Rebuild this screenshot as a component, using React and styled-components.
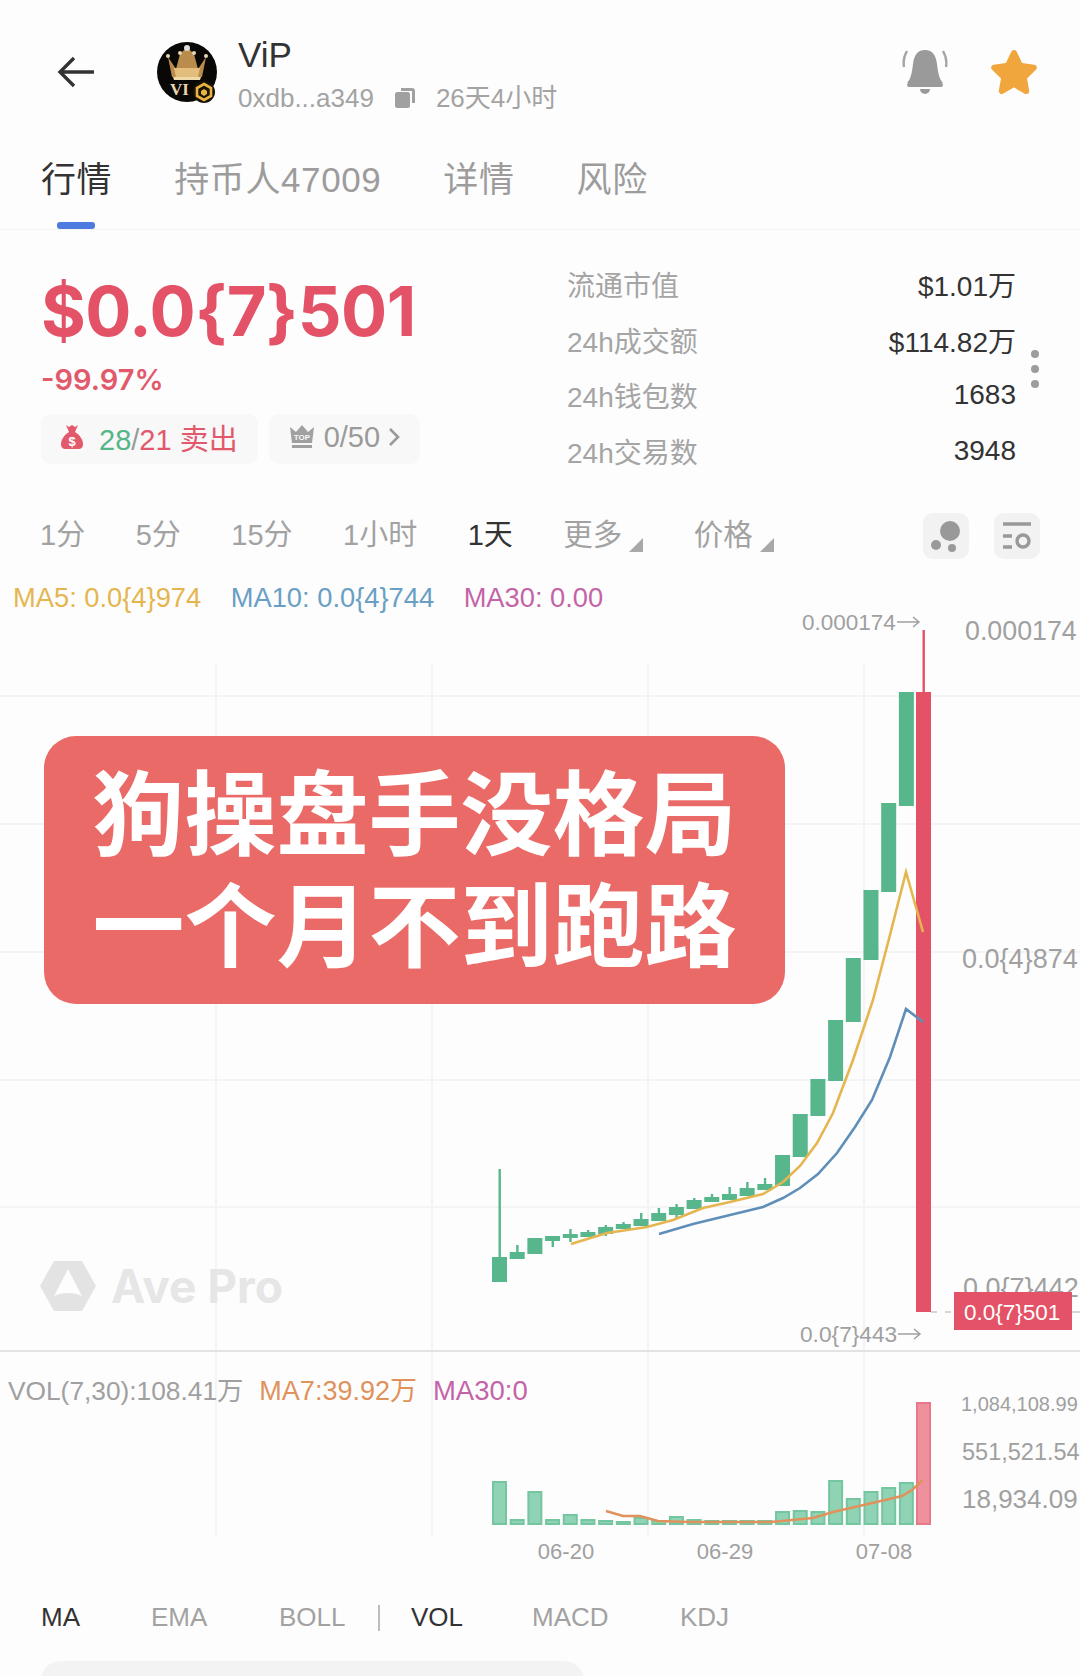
import styled, { createGlobalStyle } from "styled-components";

const FONT = `"Liberation Sans", "Noto Sans CJK SC", sans-serif`;

const GlobalStyle = createGlobalStyle`
  html, body {
    margin: 0;
    padding: 0;
    background: #fdfdfd;
  }
  body {
    font-family: ${FONT};
  }
`;

const Page = styled.div`
  width: 1080px;
  height: 1676px;
  overflow: hidden;
  background: #fdfdfd;
  color: #333;
`;

const Header = styled.header`
  height: 130px;
  box-sizing: border-box;
  padding: 42px 42px 0 57px;
  display: flex;
  align-items: flex-start;
`;
const BackBtn = styled.div`
  width: 99px;
  height: 60px;
  display: flex;
  align-items: center;
`;
const Avatar = styled.svg`
  width: 62px;
  height: 62px;
  flex: none;
`;
const TokenInfo = styled.div`
  margin-left: 20px;
  flex: 1;
  margin-top: -6px;
`;
const TokenName = styled.div`
  font-size: 35px;
  line-height: 38px;
  color: #333;
`;
const TokenMeta = styled.div`
  display: flex;
  align-items: center;
  gap: 20px;
  margin-top: 9px;
  font-size: 26px;
  line-height: 30px;
  color: #a3a3a3;
`;
const HeadIcons = styled.div`
  display: flex;
  align-items: center;
  gap: 42px;
  margin-top: 5px;
`;

const Tabs = styled.nav`
  height: 100px;
  box-sizing: border-box;
  padding-left: 41px;
  border-bottom: 1px solid #f4f4f4;
  display: flex;
  gap: 62px;
`;
const Tab = styled.div`
  position: relative;
  font-size: 35px;
  line-height: 100px;
  height: 99px;
  letter-spacing: 0.6px;
  color: ${(p) => (p.$active ? "#333" : "#9c9c9c")};
  &::after {
    content: "";
    display: ${(p) => (p.$active ? "block" : "none")};
    position: absolute;
    left: 16px;
    bottom: 0;
    width: 38px;
    height: 7px;
    border-radius: 3px;
    background: #4f7ae0;
  }
`;

const Summary = styled.section`
  height: 270px;
  box-sizing: border-box;
  padding: 26px 0 0 41px;
  display: flex;
`;
const PriceCol = styled.div`
  width: 526px;
  padding-top: 17px;
`;
const Price = styled.div`
  font-family: "Inter", ${FONT};
  font-size: 68.5px;
  line-height: 78px;
  font-weight: 700;
  letter-spacing: -0.5px;
  color: #e35266;
`;
const Change = styled.div`
  margin-top: 12px;
  font-family: "Inter", ${FONT};
  font-size: 29px;
  line-height: 34px;
  font-weight: 600;
  color: #e2596c;
`;
const Badges = styled.div`
  display: flex;
  gap: 11px;
  margin-top: 17px;
`;
const Badge = styled.div`
  height: 50px;
  box-sizing: border-box;
  padding: 0 20px 4px ${(p) => p.$pad}px;
  border-radius: 10px;
  background: #f8f8f8;
  display: flex;
  align-items: center;
  font-size: 29px;
  color: #9a9a9a;
  white-space: pre;
`;
const Green = styled.span`
  color: #56b68a;
`;
const Red = styled.span`
  color: #e2596c;
`;
const StatsCol = styled.div`
  width: 449px;
`;
const StatRow = styled.div`
  height: 55.8px;
  display: flex;
  align-items: center;
  justify-content: space-between;
  font-size: 28px;
`;
const StatLabel = styled.span`
  color: #a5a5a5;
`;
const StatValue = styled.span`
  color: #333;
`;
const MoreDots = styled.div`
  width: 40px;
  margin-top: 94px;
  margin-left: 15px;
  display: flex;
  flex-direction: column;
  gap: 7px;
`;
const Dot = styled.i`
  width: 8px;
  height: 8px;
  border-radius: 50%;
  background: #9c9c9c;
`;

const Intervals = styled.section`
  height: 58px;
  box-sizing: border-box;
  padding: 0 40px 0 40px;
  margin-top: 2.5px;
  display: flex;
  align-items: center;
  gap: 50.5px;
  font-size: 29px;
  color: #a2a2a2;
`;
const Interval = styled.div`
  position: relative;
  color: ${(p) => (p.$active ? "#333" : "#a2a2a2")};
  ${(p) =>
    p.$drop &&
    `
    font-size: 29.5px;
    margin-right: 21px;
    &::after {
      content: "";
      position: absolute;
      right: -21px;
      bottom: 1px;
      border-left: 14px solid transparent;
      border-bottom: 14px solid #a8a8a8;
    }
  `}
`;
const ToolButtons = styled.div`
  margin-left: auto;
  margin-top: 8px;
  display: flex;
  gap: 25px;
`;
const ToolButton = styled.div`
  width: 46px;
  height: 46px;
  border-radius: 10px;
  background: #f2f2f2;
  display: flex;
  align-items: center;
  justify-content: center;
`;

const Legend = styled.div`
  height: 28px;
  margin-top: 23px;
  padding-left: ${(p) => p.$left}px;
  display: flex;
  align-items: center;
  gap: 29.5px;
  font-size: 27.3px;
  white-space: nowrap;
`;
const LegendItem = styled.span`
  color: ${(p) => p.$color};
  ${(p) => p.$size && `font-size: ${p.$size}px;`}
`;

const ChartArea = styled.section`
  position: relative;
  height: 738px;
  border-bottom: 2px solid #e3e3e3;
`;
const ChartSvg = styled.svg`
  display: block;
  width: 1080px;
  height: ${(p) => p.$h}px;
  overflow: visible;
`;
const AxisText = styled.text`
  font-family: ${FONT};
  font-size: ${(p) => p.$size || 26}px;
  fill: ${(p) => p.$fill || "#a0a0a0"};
`;
const Banner = styled.div`
  position: absolute;
  left: 44px;
  top: 124px;
  width: 741px;
  height: 268px;
  border-radius: 32px;
  background: #ea6a67;
  color: #fff;
  font-size: 92px;
  font-weight: 700;
  line-height: 112px;
  text-align: center;
  box-sizing: border-box;
  padding-top: 24px;
  white-space: nowrap;
`;
const Watermark = styled.div`
  position: absolute;
  left: 40px;
  top: 646px;
  display: flex;
  align-items: center;
  gap: 15px;
  font-family: "Inter", ${FONT};
  font-size: 46px;
  font-weight: 700;
  color: #e6e6e6;
`;

const VolumeArea = styled.section`
  position: relative;
  height: 217px;
`;
const VolLegend = styled(Legend)`
  position: absolute;
  top: 17px;
  left: 0;
  margin-top: 0;
  align-items: baseline;
  gap: 16px;
  font-size: 26.3px;
`;

const Indicators = styled.section`
  height: 52px;
  margin-top: 23px;
  padding-left: 41px;
  display: flex;
  align-items: center;
  font-size: 26px;
  color: #a2a2a2;
`;
const Indicator = styled.div`
  width: ${(p) => p.$w}px;
  color: ${(p) => (p.$active ? "#333" : "#a2a2a2")};
`;
const Divider = styled.div`
  width: 2px;
  height: 26px;
  background: #bdbdbd;
  margin-right: 31px;
`;
const BottomPanel = styled.div`
  width: 543px;
  height: 60px;
  margin: 17px 0 0 41px;
  border-radius: 20px 20px 0 0;
  background: #f3f3f3;
`;

const CANDLE_X = (i) => 499.5 + 17.69 * i;

// [top, bottom, wickTop, wickBottom]
const CANDLES = [
  [1257, 1282, 1169, 1282],
  [1252, 1259, 1245, 1259],
  [1238, 1254, 1238, 1254],
  [1236, 1241, 1236, 1247],
  [1234, 1238, 1229, 1242],
  [1232, 1237, 1230, 1237],
  [1227, 1234, 1225, 1236],
  [1224, 1229, 1222, 1229],
  [1219, 1226, 1213, 1226],
  [1213, 1221, 1208, 1221],
  [1207, 1215, 1204, 1218],
  [1200, 1209, 1198, 1209],
  [1197, 1202, 1194, 1202],
  [1194, 1200, 1187, 1200],
  [1188, 1196, 1182, 1196],
  [1184, 1190, 1178, 1190],
  [1155, 1186, 1155, 1186],
  [1114, 1157, 1114, 1157],
  [1079, 1116, 1079, 1116],
  [1020, 1081, 1020, 1081],
  [958, 1022, 958, 1022],
  [890, 960, 890, 960],
  [803, 892, 803, 892],
  [692, 806, 692, 806],
];

const MA5 =
  "571,1244 607,1233 647,1227 673,1220 703,1208 730,1202 763,1194 783,1182 800,1166 817,1143 833,1113 853,1060 873,1000 890,935 906,872 923,932";
const MA10 =
  "659,1234 693,1224 730,1215 763,1207 783,1198 800,1188 818,1174 837,1153 855,1127 872,1100 890,1057 906,1009 923,1022";
const MA7 =
  "606,1511 623,1516 640,1516 658,1521 690,1522 771,1522 813,1518 833,1512 868,1504 902,1496 912,1490 923,1480";

const VOL_TOPS = [
  1482, 1520, 1492, 1520, 1515, 1520, 1521, 1522, 1518, 1521, 1517, 1520, 1521, 1521, 1521, 1521,
  1512, 1511, 1512, 1481, 1499, 1492, 1488, 1483,
];

const BackIcon = () => (
  <svg width="38" height="32" viewBox="0 0 38 32" fill="none" stroke="#333" strokeWidth="3.4">
    <path d="M37 16H3M17 2 3 16l14 14" />
  </svg>
);

const TokenAvatar = () => (
  <Avatar viewBox="0 0 62 62">
    <circle cx="31" cy="30" r="30" fill="#0a0806" />
    <path d="M12 15l8 12 4-15 7-7 7 7 4 15 8-12-4 20H16z" fill="#b98c4c" />
    <path d="M18 26h26l-2 9H20z" fill="#e3bd7c" />
    <path d="M17 35h28l-1 3H18z" fill="#f0d9a8" />
    <circle cx="12" cy="14" r="2" fill="#e6d6b8" />
    <circle cx="50" cy="14" r="2" fill="#e6d6b8" />
    <circle cx="24" cy="11" r="2" fill="#e6d6b8" />
    <circle cx="38" cy="11" r="2" fill="#e6d6b8" />
    <circle cx="31" cy="6" r="3" fill="#ddd" />
    <text x="14" y="53" fontFamily="Liberation Serif" fontSize="17" fontWeight="700" fill="#e8d5ae">VI</text>
    <circle cx="48" cy="50" r="11" fill="#191307" />
    <path d="M48 42l7 4v8l-7 4-7-4v-8z" fill="none" stroke="#e8b53e" strokeWidth="2.6" />
    <path d="M48 47l3 2v3l-3 2-3-2v-3z" fill="#e8b53e" />
  </Avatar>
);

const CopyIcon = () => (
  <svg width="22" height="22" viewBox="0 0 22 22" fill="#a0a0a0">
    <rect x="1" y="5" width="15" height="16" rx="2.5" />
    <path d="M7 1h11a3 3 0 0 1 3 3v12h-3V4H7z" />
  </svg>
);

const BellIcon = () => (
  <svg width="46" height="50" viewBox="0 0 46 50">
    <path d="M23 3c8 0 11 6 12 14 1 8 2 15 6 19H5c4-4 5-11 6-19C12 9 15 3 23 3z" fill="#9a9a9a" />
    <rect x="5" y="36" width="36" height="4" rx="2" fill="#9a9a9a" />
    <path d="M18 42h10a5 5 0 0 1-10 0z" fill="#9a9a9a" />
    <path d="M5 4C2 9 1 14 2 20M41 4c3 5 4 10 3 16" fill="none" stroke="#a5a5a5" strokeWidth="2.4" />
  </svg>
);

const StarIcon = () => (
  <svg width="48" height="48" viewBox="0 0 48 48">
    <path
      d="M24 5l6 12.6 13.8 2-10 9.8 2.4 13.7L24 36l-12.2 7 2.4-13.6-10-9.8 13.8-2z"
      fill="#f0a63c"
      stroke="#f0a63c"
      strokeWidth="6"
      strokeLinejoin="round"
    />
  </svg>
);

const BagIcon = () => (
  <svg width="24" height="26" viewBox="0 0 24 26" style={{ marginRight: 15 }}>
    <path d="M6 1l3 2 3-2 3 2 3-2-3 7H9z" fill="#e2596c" />
    <path d="M9 8h6c5 3 8 8 8 12 0 4-2 5-5 5H6c-3 0-5-1-5-5 0-4 3-9 8-12z" fill="#e2596c" />
    <text x="12" y="22" textAnchor="middle" fontFamily="Liberation Sans" fontSize="13" fontWeight="700" fill="#fff">$</text>
  </svg>
);

const CrownIcon = () => (
  <svg width="26" height="24" viewBox="0 0 26 24" style={{ marginRight: 9 }}>
    <path d="M1 2l6 5 6-7 6 7 6-5-2 16H3z" fill="#a0a0a0" />
    <rect x="3" y="20" width="20" height="3" fill="#a0a0a0" />
    <text x="13" y="15" textAnchor="middle" fontFamily="Liberation Sans" fontSize="8" fontWeight="700" fill="#f8f8f8">TOP</text>
  </svg>
);

const ChevronIcon = () => (
  <svg width="12" height="20" viewBox="0 0 12 20" fill="none" stroke="#9a9a9a" strokeWidth="2.6" style={{ marginLeft: 8 }}>
    <path d="M2 2l8 8-8 8" />
  </svg>
);

const BubblesIcon = () => (
  <svg width="32" height="32" viewBox="0 0 32 32" fill="#999">
    <circle cx="20" cy="11" r="10" />
    <circle cx="6" cy="25" r="5" />
    <circle cx="22" cy="28" r="4" />
  </svg>
);

const SettingsIcon = () => (
  <svg width="30" height="30" viewBox="0 0 30 30" fill="none" stroke="#999" strokeWidth="3.4">
    <path d="M1 3h28M1 15h9M1 26h9" />
    <circle cx="21" cy="20" r="6" />
  </svg>
);

const AveLogo = () => (
  <svg width="56" height="52" viewBox="0 0 56 52">
    <path d="M14 1h28l14 25-14 25H14L0 26z" fill="#e3e3e3" />
    <path d="M28 9l14 27c-8-4-20-4-28 0z" fill="#fdfdfd" />
  </svg>
);

const PriceChart = () => (
  <ChartSvg $h={738} viewBox="0 612 1080 738">
    {[216, 432, 648, 864].map((x) => (
      <line key={x} x1={x} x2={x} y1="664" y2="1350" stroke="#f4f4f4" strokeWidth="2" />
    ))}
    {[696, 824, 952, 1080, 1207].map((y) => (
      <line key={y} x1="0" x2="1080" y1={y} y2={y} stroke="#f4f4f4" strokeWidth="2" />
    ))}
    {CANDLES.map(([top, bottom, wt, wb], i) => (
      <g key={i} fill="#58b68c">
        <rect x={CANDLE_X(i) - 1} y={wt} width="2.4" height={wb - wt} />
        <rect x={CANDLE_X(i) - 7.5} y={top} width="15" height={bottom - top} />
      </g>
    ))}
    <rect x="922.5" y="630" width="2.4" height="62" fill="#e35266" />
    <rect x="916" y="692" width="15" height="620" fill="#e35266" />
    <polyline points={MA5} fill="none" stroke="#e5b650" strokeWidth="2.6" />
    <polyline points={MA10} fill="none" stroke="#5f8fb8" strokeWidth="2.6" />
    <AxisText x="802" y="630" $size={22.5}>0.000174</AxisText>
    <path d="M897 622h22M913 617l6 5-6 5" fill="none" stroke="#a0a0a0" strokeWidth="1.5" />
    <AxisText x="965" y="640" $size={26.8}>0.000174</AxisText>
    <AxisText x="962" y="968" $size={27}>0.0{"{"}4{"}"}874</AxisText>
    <AxisText x="963" y="1297" $size={27}>0.0{"{"}7{"}"}442</AxisText>
    <line x1="931" x2="954" y1="1312" y2="1312" stroke="#c9c9c9" strokeWidth="1.5" strokeDasharray="6 8" />
    <line x1="1072" x2="1080" y1="1312" y2="1312" stroke="#c9c9c9" strokeWidth="1.5" />
    <rect x="954" y="1292" width="118" height="38" fill="#e35266" />
    <AxisText x="964" y="1320" $size={22.5} $fill="#fff">0.0{"{"}7{"}"}501</AxisText>
    <AxisText x="800" y="1342" $size={22.7}>0.0{"{"}7{"}"}443</AxisText>
    <path d="M898 1334h22M914 1329l6 5-6 5" fill="none" stroke="#a0a0a0" strokeWidth="1.5" />
  </ChartSvg>
);

const VolumeChart = () => (
  <ChartSvg $h={217} viewBox="0 1352 1080 217">
    {[216, 432, 648, 864].map((x) => (
      <line key={x} x1={x} x2={x} y1="1352" y2="1536" stroke="#f4f4f4" strokeWidth="2" />
    ))}
    {VOL_TOPS.map((top, i) => (
      <rect
        key={i}
        x={CANDLE_X(i) - 6.5}
        y={top}
        width="13"
        height={1524 - top}
        fill="#8fd3b4"
        stroke="#74c6a0"
        strokeWidth="2"
      />
    ))}
    <rect x="917" y="1403" width="13" height="121" fill="#ef919d" stroke="#e8798a" strokeWidth="2" />
    <polyline points={MA7} fill="none" stroke="#e0925c" strokeWidth="2.6" />
    <AxisText x="961" y="1411" $size={20}>1,084,108.99</AxisText>
    <AxisText x="962" y="1460" $size={23.5}>551,521.54</AxisText>
    <AxisText x="962" y="1508" $size={26}>18,934.09</AxisText>
    <AxisText x="566" y="1559" $size={22} textAnchor="middle">06-20</AxisText>
    <AxisText x="725" y="1559" $size={22} textAnchor="middle">06-29</AxisText>
    <AxisText x="884" y="1559" $size={22} textAnchor="middle">07-08</AxisText>
  </ChartSvg>
);

const STATS = [
  ["流通市值", "$1.01万"],
  ["24h成交额", "$114.82万"],
  ["24h钱包数", "1683"],
  ["24h交易数", "3948"],
];

const App = () => {
  return (
    <Page>
      <GlobalStyle />
      <Header>
        <BackBtn>
          <BackIcon />
        </BackBtn>
        <TokenAvatar />
        <TokenInfo>
          <TokenName>ViP</TokenName>
          <TokenMeta>
            <span>0xdb...a349</span>
            <CopyIcon />
            <span>26天4小时</span>
          </TokenMeta>
        </TokenInfo>
        <HeadIcons>
          <BellIcon />
          <StarIcon />
        </HeadIcons>
      </Header>

      <Tabs>
        <Tab $active>行情</Tab>
        <Tab>持币人47009</Tab>
        <Tab>详情</Tab>
        <Tab>风险</Tab>
      </Tabs>

      <Summary>
        <PriceCol>
          <Price>$0.0{"{7}"}501</Price>
          <Change>-99.97%</Change>
          <Badges>
            <Badge $pad={19}>
              <BagIcon />
              <span>
                <Green>28</Green>/<Red>21 卖出</Red>
              </span>
            </Badge>
            <Badge $pad={20}>
              <CrownIcon />
              0/50
              <ChevronIcon />
            </Badge>
          </Badges>
        </PriceCol>
        <StatsCol>
          {STATS.map(([label, value]) => (
            <StatRow key={label}>
              <StatLabel>{label}</StatLabel>
              <StatValue>{value}</StatValue>
            </StatRow>
          ))}
        </StatsCol>
        <MoreDots>
          <Dot />
          <Dot />
          <Dot />
        </MoreDots>
      </Summary>

      <Intervals>
        <Interval>1分</Interval>
        <Interval>5分</Interval>
        <Interval>15分</Interval>
        <Interval>1小时</Interval>
        <Interval $active>1天</Interval>
        <Interval $drop>更多</Interval>
        <Interval $drop>价格</Interval>
        <ToolButtons>
          <ToolButton>
            <BubblesIcon />
          </ToolButton>
          <ToolButton>
            <SettingsIcon />
          </ToolButton>
        </ToolButtons>
      </Intervals>

      <Legend $left={13}>
        <LegendItem $color="#e5b650">MA5: 0.0{"{4}"}974</LegendItem>
        <LegendItem $color="#6a9fc4">MA10: 0.0{"{4}"}744</LegendItem>
        <LegendItem $color="#c464a8">MA30: 0.00</LegendItem>
      </Legend>

      <ChartArea>
        <PriceChart />
        <Banner>
          狗操盘手没格局
          <br />
          一个月不到跑路
        </Banner>
        <Watermark>
          <AveLogo />
          Ave Pro
        </Watermark>
      </ChartArea>

      <VolumeArea>
        <VolumeChart />
        <VolLegend $left={8}>
          <LegendItem $color="#a0a0a0">VOL(7,30):108.41万</LegendItem>
          <LegendItem $color="#e0925c" $size={27}>MA7:39.92万</LegendItem>
          <LegendItem $color="#c464a8" $size={27.5}>MA30:0</LegendItem>
        </VolLegend>
      </VolumeArea>

      <Indicators>
        <Indicator $w={110} $active>MA</Indicator>
        <Indicator $w={128}>EMA</Indicator>
        <Indicator $w={99}>BOLL</Indicator>
        <Divider />
        <Indicator $w={121} $active>VOL</Indicator>
        <Indicator $w={148}>MACD</Indicator>
        <Indicator $w={60}>KDJ</Indicator>
      </Indicators>
      <BottomPanel />
    </Page>
  );
};

export default App;
